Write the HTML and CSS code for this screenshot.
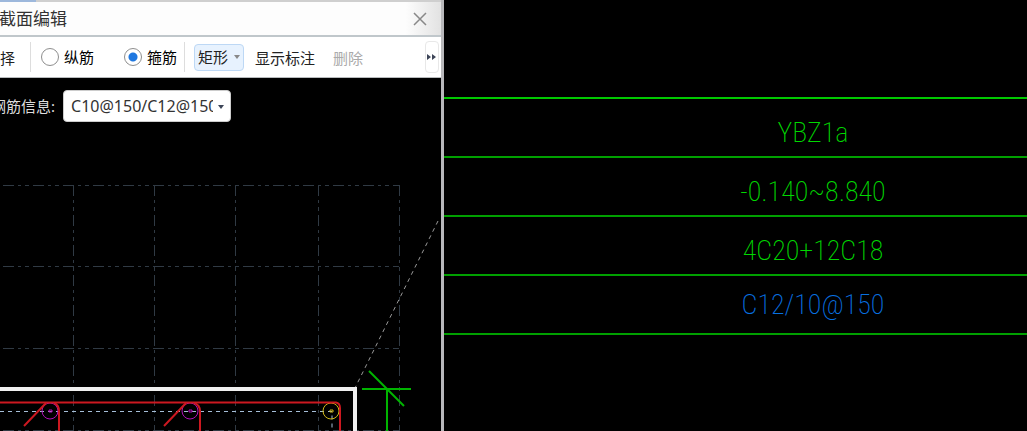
FILE: index.html
```html
<!DOCTYPE html>
<html lang="zh-CN">
<head>
<meta charset="utf-8">
<title>截面编辑</title>
<link rel="stylesheet" href="styles.css">
</head>
<body>
<main class="workspace">
  <section class="editor">
    <div class="strip"></div>
    <header class="titlebar">
      <h1 class="title">截面编辑</h1>
      <button class="close" type="button" aria-label="关闭">
        <svg width="14" height="14" viewBox="0 0 14 14"><path d="M1 1 13 13M13 1 1 13"/></svg>
      </button>
    </header>
    <div class="toolbar">
      <button class="tool tool-pick" type="button">择</button>
      <span class="divider"></span>
      <label class="option"><input type="radio" name="bar">纵筋</label>
      <label class="option"><input type="radio" name="bar" checked>箍筋</label>
      <span class="divider divider-tight"></span>
      <button class="shape" type="button">矩形<svg width="6" height="4" viewBox="0 0 6 4"><path d="M0 0h6L3 4z"/></svg></button>
      <button class="tool" type="button">显示标注</button>
      <button class="tool" type="button" disabled>删除</button>
      <button class="more" type="button" aria-label="更多"><svg width="10" height="8" viewBox="0 0 10 8"><path d="M0 1 4 4 0 7zM5 1 9 4 5 7z"/></svg></button>
    </div>
    <div class="canvas">
      <svg class="drawing" width="442" height="352" viewBox="0 79 442 352">
        <g class="grid">
          <path d="M3 185.500H399M3 266.500H399M3 348.500H399M3 430.500H399"/>
          <path d="M73.500 185V431M154.500 185V431M235.500 185V431M318.500 185V431M399.500 185V431"/>
        </g>
        <path class="leader" d="M438 221 355 388"/>
        <path class="axis" d="M0 411.500H332V431"/>
        <path class="outline" d="M0 389H355V431"/>
        <g class="bar">
          <circle cx="50" cy="411" r="8"/><circle cx="190" cy="411" r="8"/>
          <path d="M49 410h3v2h-3zM189 410h3v2h-3z"/>
        </g>
        <g class="corner"><circle cx="331" cy="411" r="8"/><path d="M330 410h3v2h-3z"/></g>
        <g class="stirrup">
          <path d="M0 402.500H336Q340 403 340 408V431"/>
          <path d="M24 426 46 403M54 403Q59 405 59 411V431"/>
          <path d="M164 426 186 403M194 403Q200 405 200 411V431"/>
        </g>
        <path class="mark" d="M362 389H411M387 389V431M369 371 404 406"/>
      </svg>
      <div class="info">
        <label class="info-label" for="rebar">钢筋信息:</label>
        <span class="combo">
          <select id="rebar"><option>C10@150/C12@150</option></select>
          <svg width="6" height="4" viewBox="0 0 6 4"><path d="M0 0h6L3 4z"/></svg>
        </span>
      </div>
    </div>
  </section>
  <section class="plan">
    <table class="schedule">
      <tbody>
        <tr><td>YBZ1a</td></tr>
        <tr><td>-0.140~8.840</td></tr>
        <tr><td>4C20+12C18</td></tr>
        <tr><td class="stirrup-spec">C12/10@150</td></tr>
      </tbody>
    </table>
  </section>
</main>
</body>
</html>
```
FILE: styles.css
```css
* { box-sizing: border-box; }

body {
  margin: 0;
  background: #000;
  color: #222;
  font: 15px/20px "Noto Sans", "Noto Sans CJK SC", sans-serif;
}

button, select { font: inherit; color: inherit; }
button { border: 0; padding: 0; background: none; }
h1 { margin: 0; }

.workspace { display: flex; min-height: 100vh; overflow: hidden; }

.editor {
  display: flex;
  flex-direction: column;
  flex: 0 0 444px;
  border-right: 3px solid #b8b8bb;
  overflow: hidden;
}

.strip {
  height: 2px;
  background: linear-gradient(90deg, #9db8dc 36px, #cfcfcf 36px);
}

.titlebar {
  display: flex;
  align-items: center;
  justify-content: space-between;
  height: 35px;
  padding-right: 14px;
  background: linear-gradient(90deg, #fdfdfd 92%, #e2e2e2);
  border-bottom: 2px solid #c0c7cb;
}

.title { margin-left: -1px; font-size: 17px; font-weight: 400; color: #333; }
.close { display: flex; }
.close svg { fill: none; stroke: #888; stroke-width: 1.5; }

.toolbar {
  display: flex;
  align-items: center;
  height: 41px;
  background: #fff;
  border-bottom: 1px solid #b8bbbd;
}

.divider { width: 1px; height: 30px; margin: 0 10px 0 15px; background: #ddd; }
.divider-tight { margin: 0 9px 0 7px; }
.tool { padding-top: 2px; }
.tool + .tool { margin-left: 18px; }
.tool:disabled { color: #aaa; }

.option { display: flex; align-items: center; gap: 5px; color: #000; white-space: nowrap; }
.option + .option { margin-left: 30px; }
.option input {
  appearance: none;
  width: 18px;
  height: 18px;
  margin: 0;
  border: 1px solid #8e8e8e;
  border-radius: 50%;
}
.option input:checked { background: radial-gradient(circle, #1f78e0 0 4px, #fff 5px); }

.shape {
  display: flex;
  align-items: center;
  gap: 6px;
  height: 27px;
  margin-right: 11px;
  padding: 0 3px;
  border: 1px solid #bdd8f5;
  border-radius: 4px;
  background: #e7f2fe;
}
.shape svg { fill: #888; }

.more {
  display: flex;
  align-items: center;
  justify-content: center;
  width: 14px;
  height: 32px;
  margin: 0 2px 0 auto;
  border: 1px solid #e8e8e8;
  border-radius: 4px;
}
.more svg { fill: #3d4558; }

.canvas { position: relative; flex: 1; }
.drawing { position: absolute; bottom: 0; left: 0; fill: none; }
.grid { stroke: #303a44; stroke-dasharray: 11 4 3 4 4 4; }
.leader { stroke: #999; stroke-dasharray: 4 4; }
.axis { stroke: #a6bfd8; stroke-dasharray: 4 4; }
.outline { stroke: #f0f0f0; stroke-width: 4; }
.bar { stroke: #b010b8; }
.corner { stroke: #d0b818; }
.stirrup { stroke: #cc1820; stroke-width: 2; }
.mark { stroke: #00b400; stroke-width: 2; }

.info {
  position: relative;
  display: flex;
  align-items: center;
  gap: 8px;
  margin: 12px 0 0 -9px;
}
.info-label { color: #ddd; white-space: nowrap; }

.combo { position: relative; width: 168px; height: 32px; }
.combo select {
  appearance: none;
  width: 100%;
  height: 100%;
  padding: 0 17px 0 7px;
  border: 1px solid #ccc;
  border-radius: 4px;
  background: #fff;
  color: #333;
  font-size: 16px;
  text-overflow: clip;
}
.combo svg { position: absolute; right: 7px; top: 15px; fill: #3d4558; }

.plan { flex: 1; padding-top: 97px; }

.schedule { width: 100%; border-collapse: collapse; border-top: 2px solid #00c800; }
.schedule td {
  height: 59px;
  padding: 11px 0 0 155px;
  border-bottom: 2px solid #00a000;
  color: #00d800;
  font: 200 28px/40px "Roboto Condensed", Roboto, sans-serif;
  text-align: center;
}
.schedule .stirrup-spec { padding-top: 0; color: #0870e0; }
```
